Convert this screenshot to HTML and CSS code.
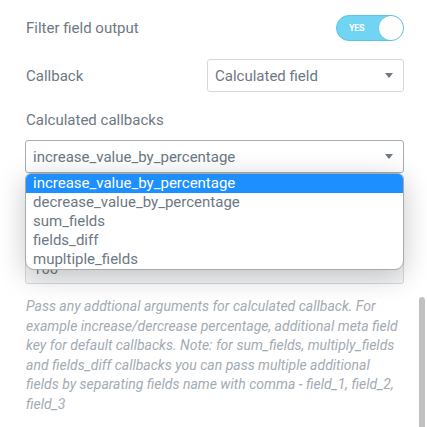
FILE: index.html
```html
<!DOCTYPE html>
<html>
<head>
<meta charset="utf-8">
<link rel="stylesheet" href="styles.css">
</head>
<body>
<div class="page">
  <div class="row row-toggle">
    <span class="label">Filter field output</span>
    <div class="toggle"><span class="toggle-text">YES</span><span class="knob"></span></div>
  </div>
  <div class="row row-callback">
    <span class="label">Callback</span>
    <div class="select select-small"><span>Calculated field</span><span class="arrow"></span></div>
  </div>
  <div class="label block-label">Calculated callbacks</div>
  <div class="select-wrap">
    <div class="select"><span>increase_value_by_percentage</span><span class="arrow"></span></div>
    <ul class="dropdown">
      <li class="active">increase_value_by_percentage</li>
      <li>decrease_value_by_percentage</li>
      <li>sum_fields</li>
      <li>fields_diff</li>
      <li>mupltiple_fields</li>
    </ul>
  </div>
  <div class="input">100</div>
  <p class="desc">Pass any addtional arguments for calculated callback. For example increase/dercrease percentage, additional meta field key for default callbacks. Note: for sum_fields, multiply_fields and fields_diff callbacks you can pass multiple additional fields by separating fields name with comma - field_1, field_2, field_3</p>
</div>
<div class="scrollbar"></div>
</body>
</html>
```
FILE: styles.css
```css
html, body {
  margin: 0;
  padding: 0;
  background: #ffffff;
  width: 427px;
  height: 427px;
  overflow: hidden;
}
body {
  font-family: Roboto, "Liberation Sans", sans-serif;
  color: #6d7882;
  position: relative;
}
.page {
  padding: 15px 23px 0 25px;
}
.row {
  display: flex;
  align-items: center;
  justify-content: space-between;
}
.label {
  font-size: 15px;
  padding-left: 1px;
}
.row-toggle {
  height: 26px;
}
.toggle {
  width: 66px;
  height: 24px;
  border: 1px solid #5cc4e4;
  background: #70d4f2;
  border-radius: 13px;
  position: relative;
  display: flex;
  align-items: center;
}
.toggle-text {
  color: #fff;
  font-size: 9px;
  font-weight: bold;
  margin-left: 12px;
  letter-spacing: -0.3px;
}
.knob {
  position: absolute;
  right: 0;
  top: 0;
  width: 24px;
  height: 24px;
  border-radius: 50%;
  background: #fff;
  box-shadow: 0 0 1px rgba(0,0,0,0.2);
}
.row-callback {
  margin-top: 18px;
}
.select {
  height: 31px;
  border: 1px solid #d5d9dd;
  border-radius: 3px;
  display: flex;
  align-items: center;
  justify-content: space-between;
  padding: 0 10px 0 7px;
  font-size: 15px;
  background: #fff;
}
.select-small {
  width: 178px;
}
.arrow {
  width: 0;
  height: 0;
  border-left: 4px solid transparent;
  border-right: 4px solid transparent;
  border-top: 5px solid #6d7882;
}
.block-label {
  margin-top: 18px;
  line-height: 20px;
}
.select-wrap {
  position: relative;
  margin-top: 10px;
}
.select-wrap .select {
  border-color: #a9adb1;
}
.dropdown {
  position: absolute;
  left: 0;
  right: 0;
  top: 33px;
  margin: 0;
  padding: 0;
  list-style: none;
  background: #fff;
  border: 1px solid #aaaaaa;
  border-radius: 6px 6px 9px 9px;
  overflow: hidden;
  box-shadow: 0 6px 28px rgba(0,0,0,0.22);
  z-index: 2;
}
.dropdown li {
  height: 19px;
  line-height: 19px;
  font-size: 15px;
  padding-left: 7px;
  color: #6d7882;
}
.dropdown li.active {
  background: #1e8fff;
  color: #fff;
}
.input {
  margin-top: 78px;
  height: 28px;
  border: 1px solid #d5d9dd;
  border-radius: 3px;
  padding: 3px 7px 0 7px;
  font-size: 15px;
  line-height: 28px;
  background: #f4f5f6;
}
.desc {
  margin: 13px 0 0 0;
  font-style: italic;
  font-size: 14px;
  line-height: 19.5px;
  color: #a3abb3;
  padding-left: 1px;
}
.scrollbar {
  position: absolute;
  left: 419px;
  top: 297px;
  width: 6px;
  height: 140px;
  background: #c1c1c1;
  border-radius: 3px;
}
```
